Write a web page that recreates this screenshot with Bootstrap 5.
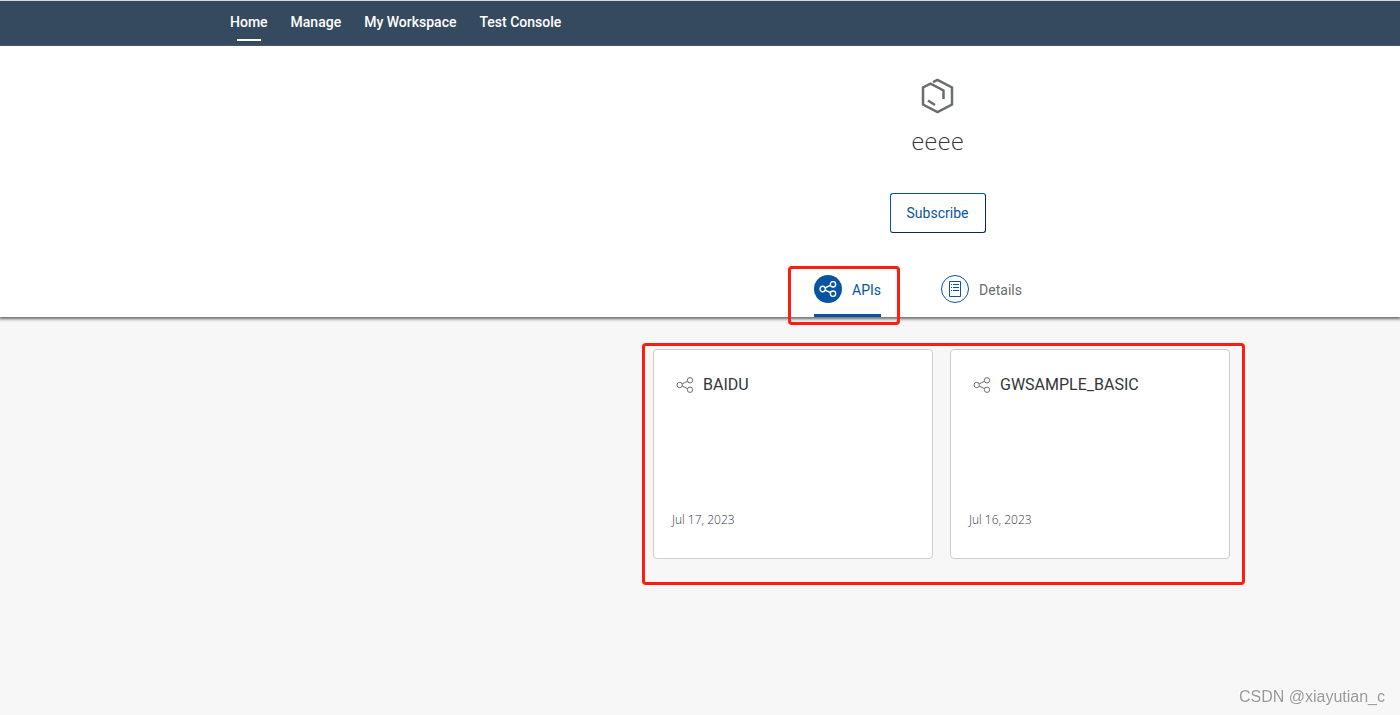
<!DOCTYPE html>
<html lang="en">
<head>
<meta charset="utf-8">
<meta name="viewport" content="width=device-width, initial-scale=1">
<title>eeee</title>
<link href="https://cdn.jsdelivr.net/npm/bootstrap@5.3.0/dist/css/bootstrap.min.css" rel="stylesheet">
<style>
  body { background: #f7f7f7; color: #32363a; font-family: "Open Sans", "Noto Sans", sans-serif; font-size: 14px; line-height: 20px; }
  a { text-decoration: none; }
  .shell { background: #354a5f; border-top: 1px solid #d9dcde; height: 46px; padding-left: 230px; gap: 23px; font-family: Roboto, sans-serif; }
  .shell .nav-link { color: #fff; font-weight: 500; padding: 11px 0 13px; }
  .shell .nav-link.active { position: relative; }
  .shell .nav-link.active::after { content: ""; position: absolute; left: 7px; right: 7px; bottom: 5px; height: 2px; background: #fff; }
  .offset-area { padding-left: 475px; }
  .hero { background: #fff; padding-top: 32px; height: 271px; box-shadow: 0 1px 3px 1px #666; }
  .product-name { font-size: 24px; line-height: 32px; font-weight: 300; margin: 11px 0 36px; }
  .btn-subscribe { --bs-btn-color: #0854a0; --bs-btn-hover-color: #0854a0; --bs-btn-hover-bg: #ebf5fe; height: 40px; width: 96px; padding: 0; font: 400 14px/20px Roboto, sans-serif; border-color: #0854a0 #0a2a4d #0a2a4d #0854a0; border-radius: 3px; }
  .tab-row { margin-top: 42px; gap: 60px; padding-right: 39px; font-family: Roboto, sans-serif; }
  .tab-row a { color: #6a6d70; gap: 10px; height: 42px; position: relative; padding-bottom: 11px; border-bottom: 3px solid transparent; }
  .tab-row a.active { color: #0854a0; border-bottom-color: #0854a0; }
  .tab-row .tab-label { padding-top: 2px; }
  .marker { position: absolute; border: 3px solid #ff1c10; border-radius: 4px; pointer-events: none; }
  .marker-tab { inset: -9px -19px -11px -26px; }
  .marker-cards { inset: -6px -15px -26px -11px; }
  .cards { gap: 17px; position: relative; margin-left: 8px; }
  .api-card { width: 280px; height: 210px; border: 1px solid #ccc; border-radius: 4px; padding: 24px 18px 28px; font-family: Roboto, sans-serif; }
  .api-card h2 { font-size: 16px; line-height: 22px; font-weight: 400; gap: 9px; margin: 0 0 0 4px; }
  .api-card h2 a { color: #32363a; }
  .api-card time { font: 300 12px/20px "Open Sans", sans-serif; color: #32363a; }
  .watermark { position: fixed; right: 15px; bottom: 8px; font: 16px/20px "Liberation Sans", sans-serif; color: #999; text-shadow: -1px -1px 0 #fff; }
</style>
</head>
<body class="d-flex flex-column min-vh-100">
<svg class="position-absolute" width="0" height="0" aria-hidden="true">
  <symbol id="share" viewBox="0 0 18 16">
    <g fill="none" stroke="currentColor"><circle cx="3.7" cy="8" r="2.7"/><circle cx="14" cy="3.3" r="2.7"/><circle cx="14" cy="12.7" r="2.7"/><path d="M6.2 6.9 8.6 5.7 11.5 4.3M6.2 9.1 11.5 11.6"/></g>
  </symbol>
</svg>
<nav class="shell nav flex-nowrap" aria-label="Main">
  <a class="nav-link active" href="#">Home</a>
  <a class="nav-link" href="#">Manage</a>
  <a class="nav-link" href="#">My Workspace</a>
  <a class="nav-link" href="#">Test Console</a>
</nav>
<header class="hero offset-area d-flex flex-column align-items-center">
  <svg width="36" height="36" viewBox="0 0 36 36" fill="none" stroke="#6a6d70" stroke-width="2.5" aria-hidden="true">
    <path d="M13 4.200 17.500 2l14.500 7.500v17L17.500 34 3 26.500V9.500L10.500 5.700 23.500 12.500v8.500"/>
    <path d="m8 22.500 7 4.500"/>
  </svg>
  <h1 class="product-name">eeee</h1>
  <button type="button" class="btn btn-subscribe">Subscribe</button>
  <nav class="tab-row d-flex" aria-label="Product sections">
    <a class="active d-flex align-items-center" href="#apis">
      <svg width="28" height="28" viewBox="0 0 28 28" aria-hidden="true"><circle cx="14" cy="14" r="14" fill="#0854a0"/><use href="#share" x="5" y="6" width="18" height="16" color="#fff" stroke-width="1.400"/></svg>
      <span class="tab-label">APIs</span>
      <span class="marker marker-tab"></span>
    </a>
    <a class="d-flex align-items-center" href="#details">
      <svg width="28" height="28" viewBox="0 0 28 28" fill="none" stroke="#0854a0" aria-hidden="true"><circle cx="14" cy="14" r="13.500"/><path d="M8.500 6.500h11v15h-11zM10 9.500h1m1 0h6M10 12.500h1m1 0h6M10 15.500h1m1 0h6"/></svg>
      <span class="tab-label">Details</span>
    </a>
  </nav>
</header>
<main class="offset-area flex-grow-1 d-flex justify-content-center align-items-start pt-4 mt-2" id="apis">
  <div class="cards d-flex">
    <article class="api-card bg-white d-flex flex-column justify-content-between">
      <h2 class="d-flex align-items-center"><svg width="18" height="16" color="#6a6d70" aria-hidden="true"><use href="#share"/></svg><a href="#">BAIDU</a></h2>
      <time datetime="2023-07-17">Jul 17, 2023</time>
    </article>
    <article class="api-card bg-white d-flex flex-column justify-content-between">
      <h2 class="d-flex align-items-center"><svg width="18" height="16" color="#6a6d70" aria-hidden="true"><use href="#share"/></svg><a href="#">GWSAMPLE_BASIC</a></h2>
      <time datetime="2023-07-16">Jul 16, 2023</time>
    </article>
    <span class="marker marker-cards"></span>
  </div>
</main>
<div class="watermark">CSDN @xiayutian_c</div>
<script src="https://cdn.jsdelivr.net/npm/bootstrap@5.3.0/dist/js/bootstrap.bundle.min.js"></script>
</body>
</html>
